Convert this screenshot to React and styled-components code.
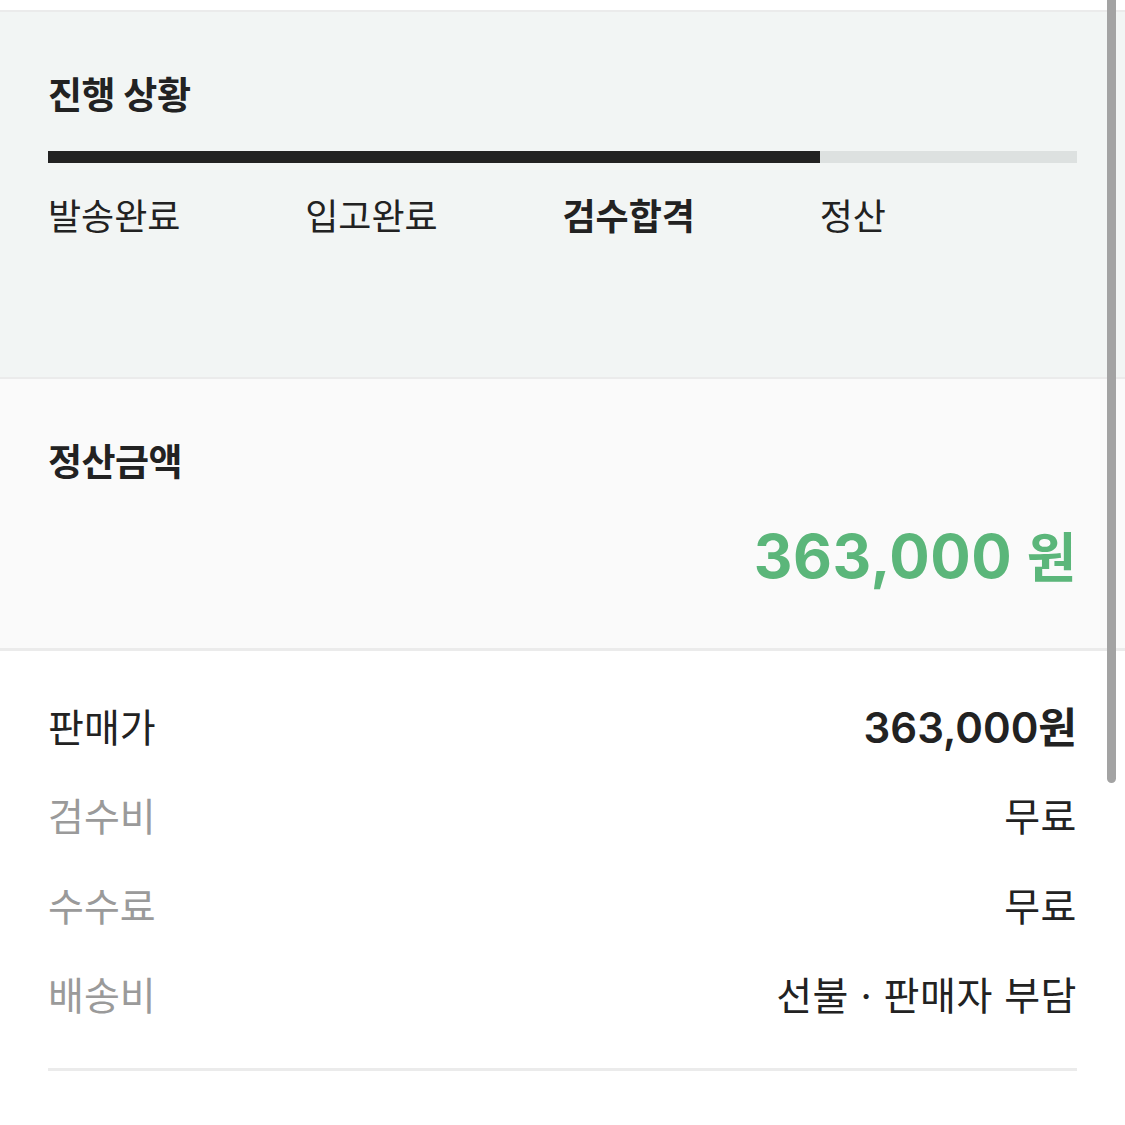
import styled, { createGlobalStyle } from 'styled-components';

const steps = [
  { label: '발송완료' },
  { label: '입고완료' },
  { label: '검수합격', current: true },
  { label: '정산' },
];

const fees = [
  { name: '판매가', value: '363,000원', main: true },
  { name: '검수비', value: '무료' },
  { name: '수수료', value: '무료' },
  { name: '배송비', value: '선불 · 판매자 부담' },
];

export default function App() {
  const progress = 75;
  return (
    <Page>
      <GlobalStyle />
      <Progress>
        <SectionTitle>진행 상황</SectionTitle>
        <Track>
          <Fill style={{ width: `${progress}%` }} />
        </Track>
        <Steps>
          {steps.map((s) => (
            <Step key={s.label} $current={s.current}>
              {s.label}
            </Step>
          ))}
        </Steps>
      </Progress>
      <Settlement>
        <SectionTitle>정산금액</SectionTitle>
        <Amount>
          363,000 <Unit>원</Unit>
        </Amount>
      </Settlement>
      <FeeList>
        {fees.map((f) => (
          <FeeRow key={f.name}>
            <FeeName $main={f.main}>{f.name}</FeeName>
            <FeeValue $main={f.main}>{f.value}</FeeValue>
          </FeeRow>
        ))}
      </FeeList>
      <ScrollThumb />
    </Page>
  );
}

const GlobalStyle = createGlobalStyle`
  body {
    margin: 0;
    background: #fff;
    font-family: "Inter", "Noto Sans CJK KR", sans-serif;
    color: #222;
  }
`;

const Page = styled.div`
  position: relative;
  width: 1125px;
  min-height: 1125px;
  padding-top: 10px;
  box-sizing: border-box;
  background: #fff;
`;

const Progress = styled.section`
  height: 369px;
  box-sizing: border-box;
  padding: 62px 48px 0;
  background: #f2f5f4;
  border-top: 2px solid #ebebeb;
  border-bottom: 2px solid #ebebeb;
`;

const SectionTitle = styled.h2`
  margin: 0;
  font-size: 37px;
  line-height: 44px;
  font-weight: 700;
  color: #222;
  letter-spacing: -0.5px;
`;

const Track = styled.div`
  margin-top: 33px;
  height: 12px;
  background: #dde1e0;
`;

const Fill = styled.div`
  height: 100%;
  background: #222;
`;

const Steps = styled.div`
  display: grid;
  grid-template-columns: repeat(4, 1fr);
  margin-top: 32px;
`;

const Step = styled.span`
  font-size: 36px;
  line-height: 44px;
  font-weight: ${({ $current }) => ($current ? 700 : 400)};
  color: #222;
`;

const Settlement = styled.section`
  height: 272px;
  box-sizing: border-box;
  padding: 62px 48px 0;
  background: #fafafa;
  border-bottom: 3px solid #ebebeb;
  display: flex;
  flex-direction: column;
`;

const Amount = styled.div`
  margin-top: 36px;
  align-self: flex-end;
  font-size: 60px;
  line-height: 70px;
  font-weight: 700;
  color: #5bb67a;
  letter-spacing: 0.5px;
`;

const Unit = styled.span`
  font-size: 54px;
`;

const FeeList = styled.div`
  margin: 0 48px;
  padding: 29px 0 30px;
  border-bottom: 3px solid #ebebeb;
`;

const FeeRow = styled.div`
  display: flex;
  justify-content: space-between;
  align-items: center;
  height: 89.5px;
`;

const FeeName = styled.span`
  font-size: 39px;
  color: ${({ $main }) => ($main ? '#222' : '#9a9a9a')};
`;

const FeeValue = styled.span`
  font-size: ${({ $main }) => ($main ? '42px' : '39px')};
  font-weight: ${({ $main }) => ($main ? 600 : 400)};
  letter-spacing: ${({ $main }) => ($main ? '0' : '0.5px')};
  color: #222;
`;

const ScrollThumb = styled.div`
  position: absolute;
  top: 0;
  right: 9px;
  width: 9px;
  height: 783px;
  background: #a3a3a3;
  border-radius: 0 0 5px 5px;
`;
